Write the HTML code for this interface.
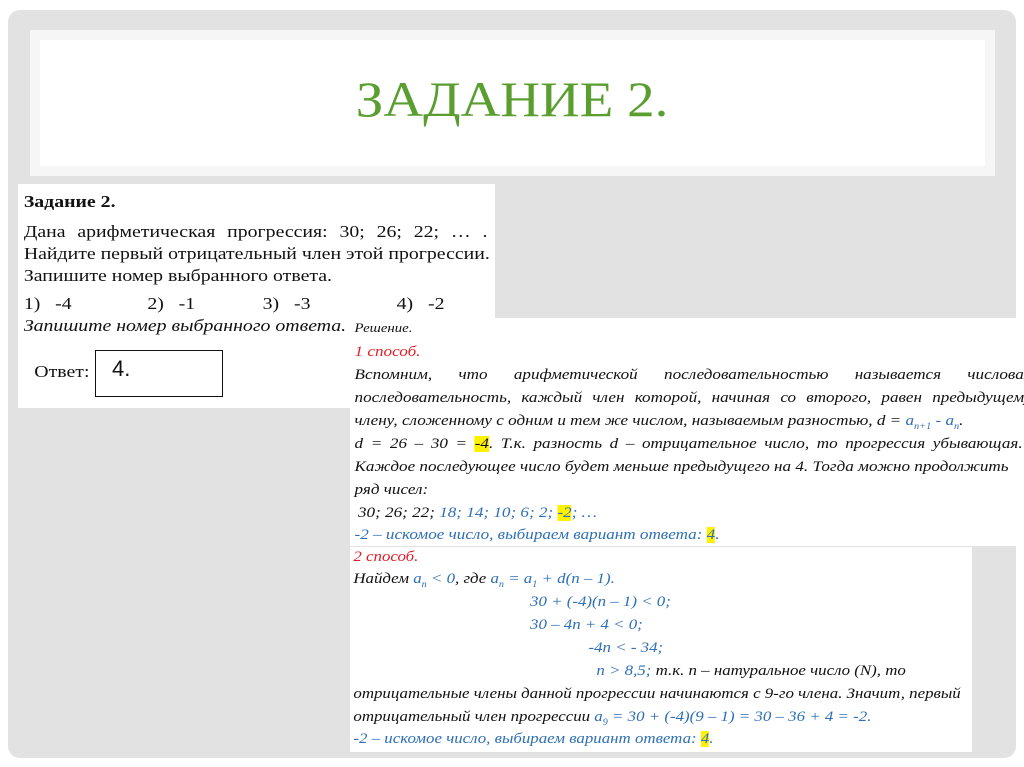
<!DOCTYPE html>
<html><head><meta charset="utf-8"><style>
body{margin:0;width:1024px;height:767px;background:#fff;position:relative;overflow:hidden;font-family:"Liberation Serif",serif}
.panel{position:absolute;left:8px;top:10px;width:1008px;height:748px;background:#e2e2e2;border-radius:12px}
.tb{position:absolute;left:30px;top:30px;width:965px;height:146px;background:#f6f6f6}
.ti{position:absolute;left:40px;top:40px;width:945px;height:126px;background:#fff;text-align:center}
.ti span{display:inline-block;margin-top:30px;font-size:50px;color:#5a9e2f;transform:scaleX(1.1)}
.im{position:absolute;background:#fff;overflow:hidden}
.w{position:absolute;left:0;top:0;transform-origin:0 0}
.l{position:absolute;white-space:nowrap;left:0}
.j{white-space:normal;text-align:justify;text-align-last:justify}
.i{font-style:italic}
.b{color:#2e6fb5}.r{color:#e0202a}.y{background:#fff200}
</style></head><body>
<div class="panel"></div>
<div class="tb"></div>
<div class="ti"><span>ЗАДАНИЕ 2.</span></div>

<div class="im" style="left:18px;top:184px;width:477px;height:224px;font-size:17px;color:#111">
<div class="w" style="transform:scaleX(1.165);width:410px;height:224px">
<div class="l" style="left:5px;top:8px;font-weight:bold">Задание 2.</div>
<div class="l j" style="left:5px;top:38px;width:398px">Дана арифметическая прогрессия: 30; 26; 22; … .</div>
<div class="l" style="left:5px;top:60px">Найдите первый отрицательный член этой прогрессии.</div>
<div class="l" style="left:5px;top:82px">Запишите номер выбранного ответа.</div>
<div class="l" style="left:5px;top:110px">1)&nbsp;&nbsp; -4</div>
<div class="l" style="left:111px;top:110px">2)&nbsp;&nbsp; -1</div>
<div class="l" style="left:210px;top:110px">3)&nbsp;&nbsp; -3</div>
<div class="l" style="left:325px;top:110px">4)&nbsp;&nbsp; -2</div>
<div class="l i" style="left:5px;top:132px">Запишите номер выбранного ответа.</div>
<div class="l" style="left:14px;top:178px">Ответ:</div>
</div>
<div style="position:absolute;left:77px;top:166px;width:126px;height:45px;border:1.5px solid #111"></div>
<div class="l" style="left:94px;top:172px;font-family:'Liberation Sans',sans-serif;font-size:22px">4.</div>
</div>

<div class="im i" style="left:350px;top:318px;width:674px;height:228px;font-size:15px;color:#111">
<div class="w" style="transform:scaleX(1.14);width:592px;height:228px">
<div class="l" style="left:4px;top:2px;font-size:13px">Решение.</div>
<div class="l r" style="left:4px;top:26px">1 способ.</div>
<div class="l j" style="left:4px;top:49px;width:594px">Вспомним, что арифметической последовательностью называется числовая</div>
<div class="l j" style="left:4px;top:72px;width:594px">последовательность, каждый член которой, начиная со второго, равен предыдущему</div>
<div class="l" style="left:4px;top:95px">члену, сложенному с одним и тем же числом, называемым разностью, <i>d</i> = <span class="b">a<sub style="font-size:9px">n+1</sub> - a<sub style="font-size:9px">n</sub></span>.</div>
<div class="l j" style="left:4px;top:118px;width:586px">d = 26 – 30 = <span class="y">-4</span>. Т.к. разность d – отрицательное число, то прогрессия убывающая.</div>
<div class="l" style="left:4px;top:141px">Каждое последующее число будет меньше предыдущего на 4. Тогда можно продолжить</div>
<div class="l" style="left:4px;top:164px">ряд чисел:</div>
<div class="l" style="left:7px;top:187px">30; 26; 22; <span class="b">18; 14; 10; 6; 2; <span class="y">-2</span>; …</span></div>
<div class="l b" style="left:4px;top:209px">-2 – искомое число, выбираем вариант ответа: <span class="y">4</span>.</div>
</div>
</div>

<div class="im i" style="left:350px;top:547px;width:622px;height:205px;font-size:15px;color:#111">
<div class="w" style="transform:scaleX(1.125);width:553px;height:205px">
<div class="l r" style="left:3px;top:2px">2 способ.</div>
<div class="l" style="left:3px;top:24px">Найдем <span class="b">a<sub style="font-size:9px">n</sub> &lt; 0</span>, где <span class="b">a<sub style="font-size:9px">n</sub> = a<sub style="font-size:9px">1</sub> + d(n – 1).</span></div>
<div class="l b" style="left:160px;top:47px">30 + (-4)(n – 1) &lt; 0;</div>
<div class="l b" style="left:160px;top:70px">30 – 4n + 4 &lt; 0;</div>
<div class="l b" style="left:212px;top:93px">-4n &lt; - 34;</div>
<div class="l" style="left:219px;top:116px"><span class="b">n &gt; 8,5;</span> т.к. n – натуральное число (N), то</div>
<div class="l" style="left:3px;top:139px">отрицательные члены данной прогрессии начинаются с 9-го члена. Значит, первый</div>
<div class="l" style="left:3px;top:162px">отрицательный член прогрессии <span class="b">a<sub style="font-size:9px">9</sub> = 30 + (-4)(9 – 1) = 30 – 36 + 4 = -2.</span></div>
<div class="l b" style="left:3px;top:184px">-2 – искомое число, выбираем вариант ответа: <span class="y">4</span>.</div>
</div>
</div>
</body></html>
